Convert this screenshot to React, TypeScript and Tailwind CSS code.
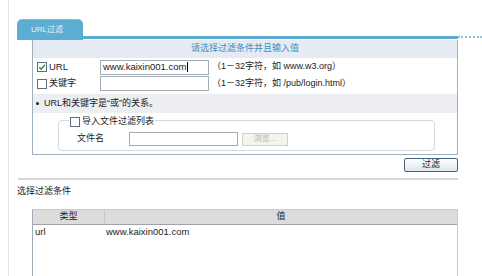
import React from "react";

function Box({ checked = false }: { checked?: boolean }) {
  return (
    <span className="inline-flex h-[10px] w-[10px] shrink-0 items-center justify-center border border-[#5f6f7f] bg-white">
      {checked && (
        <svg viewBox="0 0 10 10" className="h-[8px] w-[8px]">
          <path d="M1.5 5.2 L4 7.6 L8.6 2.2" fill="none" stroke="#2f9a3a" strokeWidth="1.8" />
        </svg>
      )}
    </span>
  );
}

export default function App() {
  return (
    <div
      className="h-[276px] w-[482px] overflow-hidden bg-white text-[9px] text-[#222]"
      style={{ fontFamily: '"Liberation Sans", "Noto Sans CJK SC", sans-serif' }}
    >
      <div className="ml-[8px] h-full border-l border-[#e4e4e4] pt-[19px]">
        {/* tab strip */}
        <div className="flex h-[21px] items-end">
          <div className="ml-[8px] flex h-[21px] w-[66px] items-center justify-center rounded-t-[5px] border-t border-dotted border-[#9fd0e6] bg-[#5badd2] pr-[6px] text-[8px] text-[#e6f4fb]">
            URL过滤
          </div>
          <div className="mb-[1px] h-[3px] w-[375px] bg-[#5badd2]" />
          <div className="mb-[1px] h-[3px] flex-1 border-t-2 border-dotted border-[#8fc6de]" />
        </div>

        {/* main panel */}
        <div className="ml-[23px] w-[426px] border-x border-b border-[#9fb0c0]">
          <div className="flex h-[18px] items-center justify-center bg-[#e6ebf3] text-[#3b8dc0]">
            请选择过滤条件并且输入值
          </div>
          <div className="flex h-[17px] items-center pt-[1px]">
            <div className="flex w-[67px] items-center gap-[2px] pl-[4px]">
              <Box checked />
              <span className="text-[9.5px]">URL</span>
            </div>
            <div className="flex h-[15px] w-[109px] items-center border border-[#a4adb6] pl-[2px] text-[9.5px]">
              www.kaixin001.com<span className="ml-[1px] h-[10px] w-px bg-black" />
            </div>
            <span className="ml-[3px]">（1－32字符，如 www.w3.org）</span>
          </div>
          <div className="flex h-[17px] items-center">
            <div className="flex w-[67px] items-center gap-[2px] pl-[4px]">
              <Box />
              <span>关键字</span>
            </div>
            <div className="h-[15px] w-[109px] border border-[#a4adb6]" />
            <span className="ml-[3px]">（1－32字符，如 /pub/login.html）</span>
          </div>
          <div className="mt-[2px] flex h-[19px] items-center gap-[5px] bg-[#eceef1] pl-[3px]">
            <span className="h-[3px] w-[3px] rounded-full bg-[#222]" />
            <span>URL和关键字是“或”的关系。</span>
          </div>
          <div className="px-[25px] pb-[3px] pt-[7px]">
            <div className="relative h-[31px] w-[377px] rounded-[4px] border border-[#d6d8da]">
              <div className="absolute -top-[6px] left-[10px] flex items-center gap-[2px] bg-white px-[1px]">
                <Box />
                <span>导入文件过滤列表</span>
              </div>
              <div className="flex items-center pt-[11px]">
                <span className="ml-[18px] w-[52px]">文件名</span>
                <div className="h-[14px] w-[109px] border border-[#a4adb6]" />
                <div className="ml-[4px] flex h-[13px] w-[46px] items-center justify-center border border-[#cfd2cc] bg-[#f4f4ee] text-[8px] text-[#b0b0b0]">
                  浏览...
                </div>
              </div>
            </div>
          </div>
        </div>

        {/* filter button */}
        <div className="flex w-[449px] justify-end pt-[3px]">
          <div className="flex h-[14px] w-[54px] items-center justify-center rounded-[2px] border border-[#44607c] bg-gradient-to-b from-white to-[#dde6ee]">
            过滤
          </div>
        </div>

        <div className="ml-[9px] mt-[6px] h-[2px] w-[440px] bg-[#d6d6d6]" />

        <div className="ml-[8px] mt-[5px] h-[12px] leading-[12px]">选择过滤条件</div>

        {/* table */}
        <div className="ml-[23px] mt-[12px] h-[80px] w-[426px] border-l border-r border-t border-l-[#a0adb8] border-r-[#b6d2e2] border-t-[#c4ccd2]">
          <div className="flex h-[15px] border-b border-[#9ea4aa] bg-[#dcdcdc]">
            <div className="flex w-[72px] items-center justify-center border-r border-[#c8c8c8]">类型</div>
            <div className="flex flex-1 items-center justify-center">值</div>
          </div>
          <div className="flex h-[14px] items-center text-[9.5px]">
            <div className="w-[72px] pl-[2px]">url</div>
            <div className="pl-[1px]">www.kaixin001.com</div>
          </div>
        </div>
      </div>
    </div>
  );
}
